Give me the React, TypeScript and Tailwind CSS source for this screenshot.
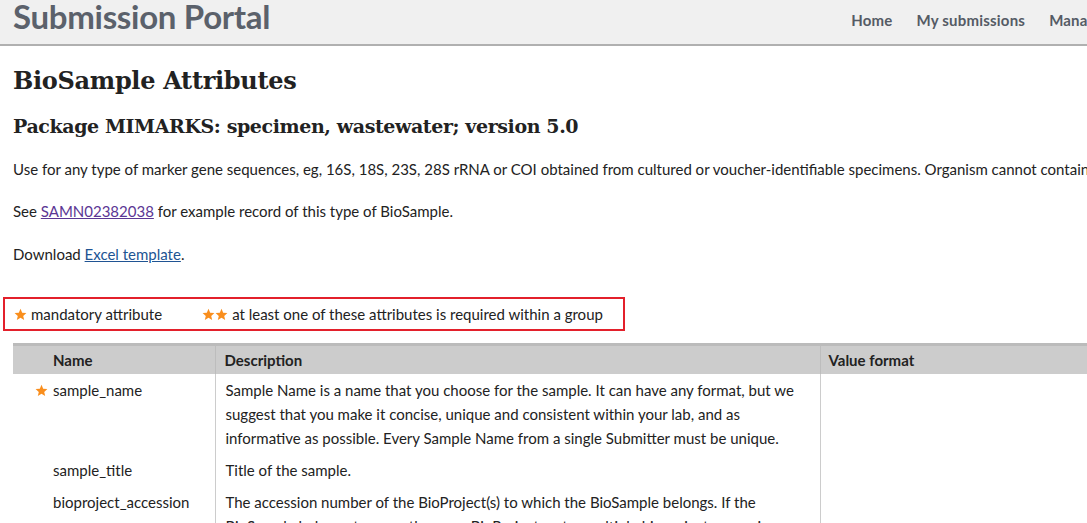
import React from "react";

const sans = { fontFamily: "Lato, 'Open Sans', sans-serif" };
const serif = { fontFamily: "'DejaVu Serif', 'Liberation Serif', serif" };

function Star() {
    return (
        <svg viewBox="0 0 24 24" className="w-[13px] h-[13px] block" fill="#f98e1d">
            <path d="M12 1.5l3.1 7.2 7.8.7-5.9 5.2 1.8 7.7L12 18.2l-6.8 4.1 1.8-7.7-5.9-5.2 7.8-.7z" />
        </svg>
    );
}

const rows = [
    {
        name: "sample_name",
        required: true,
        description:
            "Sample Name is a name that you choose for the sample. It can have any format, but we suggest that you make it concise, unique and consistent within your lab, and as informative as possible. Every Sample Name from a single Submitter must be unique.",
    },
    { name: "sample_title", required: false, description: "Title of the sample." },
    {
        name: "bioproject_accession",
        required: false,
        description:
            "The accession number of the BioProject(s) to which the BioSample belongs. If the BioSample belongs to more than one BioProject, enter multiple bioproject_accession values.",
    },
];

export default function App() {
    return (
        <div className="w-[1087px] h-[523px] overflow-hidden bg-white text-[#222]" style={sans}>
            <div className="min-w-[1400px]">
                {/* top bar */}
                <header className="h-[46px] bg-[#f0f0f0] border-b-2 border-[#b0b0b0] flex items-start px-[13px]">
                    <div className="text-[33px] leading-[32px] font-bold text-[#5b616b] tracking-[-0.3px]">Submission Portal</div>
                    <nav className="ml-[581px] mt-[9px] flex gap-[24px] text-[15px] font-bold text-[#555b65] tracking-[0.2px]">
                        <a>Home</a>
                        <a>My submissions</a>
                        <a>Manage data</a>
                    </nav>
                </header>

                <main className="px-[13px]">
                    <h1 className="mt-[18px] text-[24px] leading-[34px] font-bold text-[#222] tracking-[-0.3px]" style={serif}>
                        BioSample Attributes
                    </h1>
                    <h2 className="mt-[14px] text-[19px] leading-[28px] font-bold text-[#222] tracking-[-0.4px]" style={serif}>
                        Package MIMARKS: specimen, wastewater; version 5.0
                    </h2>
                    <p className="mt-[17px] text-[15px] leading-[24px] whitespace-nowrap">
                        Use for any type of marker gene sequences, eg, 16S, 18S, 23S, 28S rRNA or COI obtained from cultured or voucher-identifiable specimens. Organism cannot contain the term 'environmental'.
                    </p>
                    <p className="mt-[18px] text-[15px] leading-[24px]">
                        See <a className="text-[#5b3694] underline">SAMN02382038</a> for example record of this type of BioSample.
                    </p>
                    <p className="mt-[19px] text-[15px] leading-[24px]">
                        Download <a className="text-[#205493] underline">Excel template</a>.
                    </p>

                    <div className="mt-[31px] -ml-[10px] w-[622px] h-[34px] border-2 border-[#e3202b] flex items-center pl-[9px] text-[15px]">
                        <Star />
                        <span className="ml-[4px]">mandatory attribute</span>
                        <span className="ml-[40px] flex">
                            <Star />
                            <Star />
                        </span>
                        <span className="ml-[4px]">at least one of these attributes is required within a group</span>
                    </div>

                    <table className="mt-[12px] border-collapse text-[15px] leading-[24px]">
                        <thead>
                            <tr className="bg-[#cccccc] border-t-[3px] border-[#bbbbbb]">
                                <th className="w-[202px] h-[29px] pl-[40px] text-left font-bold">Name</th>
                                <th className="w-[605px] pl-[9px] text-left font-bold border-l border-[#bdbdbd]">Description</th>
                                <th className="w-[400px] pl-[8px] text-left font-bold border-l border-[#bdbdbd]">Value format</th>
                            </tr>
                        </thead>
                        <tbody>
                            {rows.map((r) => (
                                <tr key={r.name} className="align-top">
                                    <td className="relative pl-[40px] py-[4px]">
                                        {r.required && (
                                            <span className="absolute left-[22px] top-[10px] flex">
                                                <Star />
                                            </span>
                                        )}
                                        {r.name}
                                    </td>
                                    <td className="px-[10px] py-[4px] border-l border-[#cccccc]">{r.description}</td>
                                    <td className="px-[8px] py-[4px] border-l border-[#cccccc]"></td>
                                </tr>
                            ))}
                        </tbody>
                    </table>
                </main>
            </div>
        </div>
    );
}
